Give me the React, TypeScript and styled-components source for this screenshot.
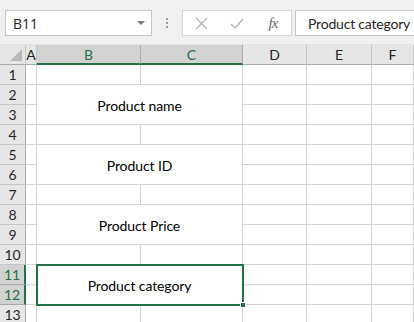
import React from 'react';
import styled, { createGlobalStyle } from 'styled-components';

const GREEN = '#217346';
const GRID = '#d4d4d4';

const GlobalStyle = createGlobalStyle`
  html, body {
    margin: 0;
    padding: 0;
    background: #ffffff;
  }
  * {
    box-sizing: border-box;
  }
`;

const Page = styled.div`
  width: 414px;
  height: 322px;
  overflow: hidden;
  font-family: Lato, "Open Sans", sans-serif;
  background: #ffffff;
`;

const Toolbar = styled.div`
  height: 45px;
  background: #f0f0f0;
  display: flex;
  align-items: flex-start;
  padding: 10px 0 0 5px;
  border-bottom: 1px solid #e2e2e2;
`;

const NameBox = styled.div`
  width: 147px;
  height: 26px;
  background: #ffffff;
  border: 1px solid #c6c6c6;
  display: flex;
  align-items: center;
  justify-content: space-between;
  padding: 0 6px 0 7px;
  font-family: "Open Sans", sans-serif;
  font-size: 14px;
  color: #262626;
`;

const DropArrow = styled.span`
  width: 0;
  height: 0;
  border-left: 4px solid transparent;
  border-right: 4px solid transparent;
  border-top: 4px solid #7a7a7a;
`;

const Grip = styled.div`
  width: 30px;
  height: 26px;
  display: flex;
  flex-direction: column;
  align-items: center;
  justify-content: center;
  gap: 2px;
`;

const GripDot = styled.span`
  width: 2px;
  height: 2px;
  background: #9a9a9a;
`;

const ButtonBox = styled.div`
  width: 110px;
  height: 26px;
  background: #ffffff;
  border: 1px solid #d6d6d6;
  display: flex;
  align-items: center;
`;

const ToolButton = styled.div<{ $w: number }>`
  width: ${(p) => p.$w}px;
  height: 24px;
  display: flex;
  align-items: center;
  justify-content: center;
  color: #b8b8b8;
`;

const Fx = styled.span`
  font-family: "Liberation Serif", serif;
  font-style: italic;
  font-size: 15px;
  color: #6a6a6a;
  letter-spacing: -1px;
`;

const FormulaBox = styled.div`
  flex: 1;
  height: 26px;
  margin-left: 3px;
  background: #ffffff;
  border: 1px solid #c6c6c6;
  border-right: none;
  display: flex;
  align-items: center;
  padding-left: 12px;
  font-family: Lato, "Open Sans", sans-serif;
  font-size: 14px;
  letter-spacing: -0.2px;
  color: #262626;
  white-space: nowrap;
  overflow: hidden;
`;

const Sheet = styled.div`
  display: grid;
  grid-template-columns: 26px 11px 104px 102px 64px 65px 1fr;
  grid-template-rows: 20px repeat(13, 20px);
`;

const Corner = styled.div`
  background: #e6e6e6;
  border-right: 1px solid #c6c6c6;
  border-bottom: 1px solid #ababab;
  display: flex;
  align-items: flex-end;
  justify-content: flex-end;
  padding: 0 3px 3px 0;
`;

const ColHead = styled.div<{ $sel?: boolean }>`
  background: ${(p) => (p.$sel ? '#d2d2d2' : '#e6e6e6')};
  color: ${(p) => (p.$sel ? GREEN : '#262626')};
  border-right: 1px solid ${(p) => (p.$sel ? '#ababab' : '#c6c6c6')};
  border-bottom: ${(p) => (p.$sel ? `2px solid ${GREEN}` : '1px solid #ababab')};
  display: flex;
  align-items: center;
  justify-content: center;
  font-size: 14px;
`;

const RowHead = styled.div<{ $sel?: boolean }>`
  background: ${(p) => (p.$sel ? '#d2d2d2' : '#e6e6e6')};
  color: ${(p) => (p.$sel ? GREEN : '#262626')};
  border-right: ${(p) => (p.$sel ? `2px solid ${GREEN}` : '1px solid #ababab')};
  border-bottom: 1px solid ${(p) => (p.$sel ? '#ababab' : '#c6c6c6')};
  display: flex;
  align-items: center;
  justify-content: center;
  font-size: 14px;
`;

const Cell = styled.div`
  border-right: 1px solid ${GRID};
  border-bottom: 1px solid ${GRID};
`;

const Merged = styled.div<{ $row: number }>`
  grid-column: 3 / 5;
  grid-row: ${(p) => p.$row} / span 2;
  position: relative;
  border-right: 1px solid ${GRID};
  border-bottom: 1px solid ${GRID};
  display: flex;
  align-items: center;
  justify-content: center;
  padding-top: 1px;
  font-size: 14px;
  letter-spacing: -0.1px;
  color: #000000;
`;

const Selection = styled.div`
  position: absolute;
  top: -1px;
  left: -1px;
  right: -2px;
  bottom: -2px;
  border: 2px solid ${GREEN};
  pointer-events: none;
`;

const FillHandle = styled.div`
  position: absolute;
  right: -4px;
  bottom: -4px;
  width: 6px;
  height: 6px;
  background: ${GREEN};
  border: 1px solid #ffffff;
`;

const columns = ['A', 'B', 'C', 'D', 'E', 'F'];
const selectedCols = ['B', 'C'];

const blocks: { row: number; text: string; selected?: boolean }[] = [
  { row: 2, text: 'Product name' },
  { row: 5, text: 'Product ID' },
  { row: 8, text: 'Product Price' },
  { row: 11, text: 'Product category', selected: true },
];

const isMergedRow = (r: number) => blocks.some((b) => r === b.row || r === b.row + 1);
const isBlockStart = (r: number) => blocks.find((b) => b.row === r);

const App: React.FC = () => {
  const rows = Array.from({ length: 13 }, (_, i) => i + 1);

  return (
    <Page>
      <GlobalStyle />
      <Toolbar>
        <NameBox>
          <span>B11</span>
          <DropArrow />
        </NameBox>
        <Grip>
          <GripDot />
          <GripDot />
          <GripDot />
        </Grip>
        <ButtonBox>
          <ToolButton $w={36}>
            <svg width="13" height="13" viewBox="0 0 13 13">
              <path d="M1 1 L12 12 M12 1 L1 12" stroke="currentColor" strokeWidth="1.4" />
            </svg>
          </ToolButton>
          <ToolButton $w={36}>
            <svg width="14" height="11" viewBox="0 0 14 11">
              <path d="M1 6 L5 10 L13 1" stroke="currentColor" strokeWidth="1.5" fill="none" />
            </svg>
          </ToolButton>
          <ToolButton $w={36}>
            <Fx>fx</Fx>
          </ToolButton>
        </ButtonBox>
        <FormulaBox>Product category</FormulaBox>
      </Toolbar>
      <Sheet>
        <Corner>
          <svg width="12" height="12" viewBox="0 0 12 12">
            <polygon points="12,0 12,12 0,12" fill="#b9b9b9" />
          </svg>
        </Corner>
        {columns.map((c) => (
          <ColHead key={c} $sel={selectedCols.includes(c)}>
            {c}
          </ColHead>
        ))}
        {rows.map((r) => {
          const block = isBlockStart(r);
          const merged = isMergedRow(r);
          return (
            <React.Fragment key={r}>
              <RowHead $sel={r === 11 || r === 12} style={{ gridRow: r + 1, gridColumn: 1 }}>
                {r}
              </RowHead>
              <Cell style={{ gridRow: r + 1, gridColumn: 2 }} />
              {block && (
                <Merged $row={r + 1}>
                  {block.text}
                  {block.selected && (
                    <Selection>
                      <FillHandle />
                    </Selection>
                  )}
                </Merged>
              )}
              {!merged && (
                <>
                  <Cell style={{ gridRow: r + 1, gridColumn: 3 }} />
                  <Cell style={{ gridRow: r + 1, gridColumn: 4 }} />
                </>
              )}
              <Cell style={{ gridRow: r + 1, gridColumn: 5 }} />
              <Cell style={{ gridRow: r + 1, gridColumn: 6 }} />
              <Cell style={{ gridRow: r + 1, gridColumn: 7 }} />
            </React.Fragment>
          );
        })}
      </Sheet>
    </Page>
  );
};

export default App;
